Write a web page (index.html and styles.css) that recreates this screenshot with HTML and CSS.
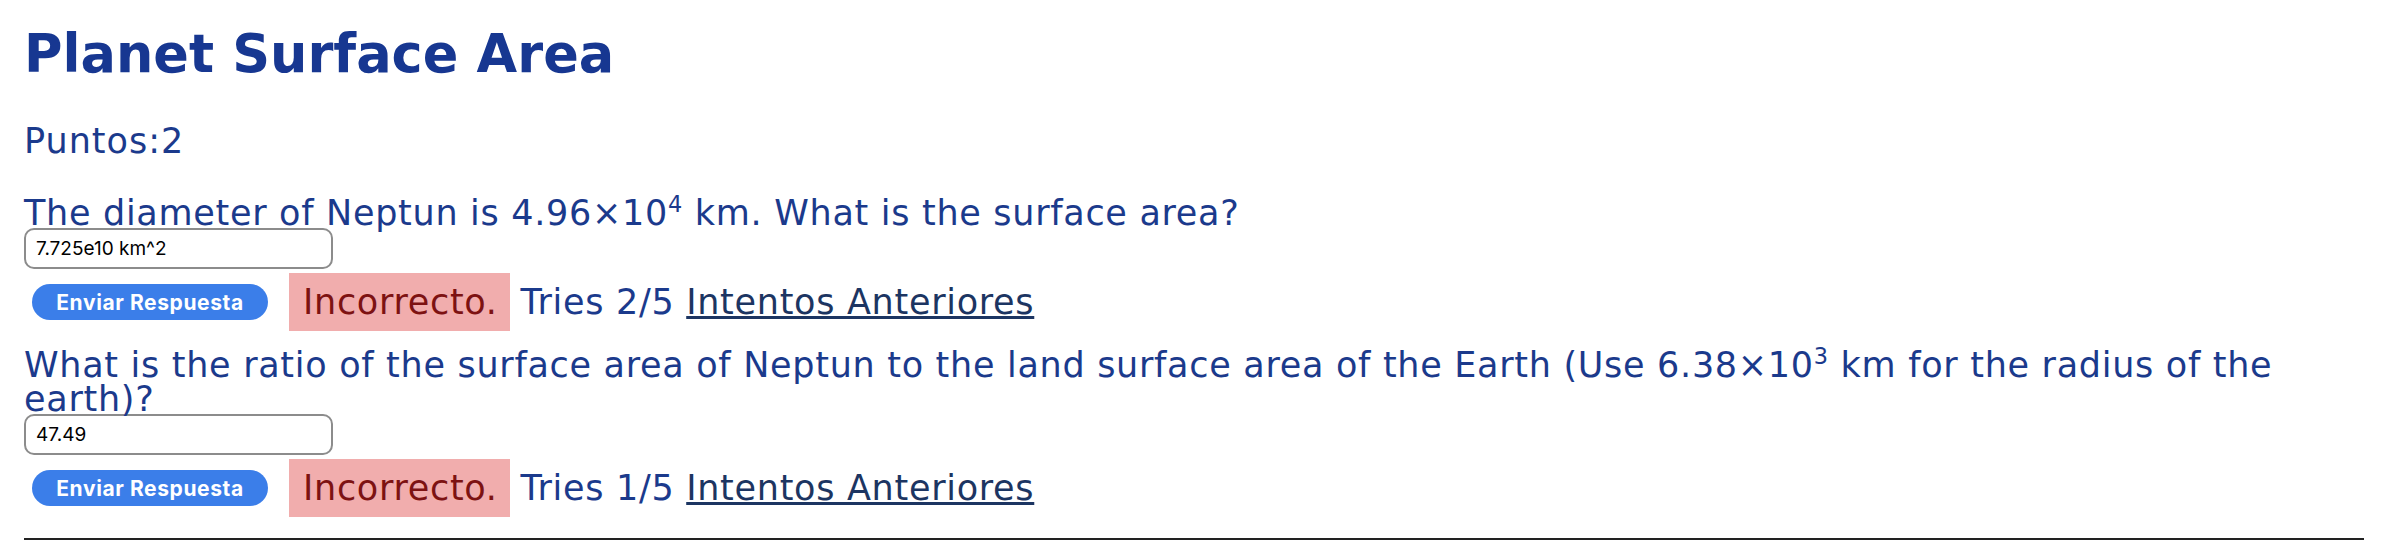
FILE: index.html
```html
<!DOCTYPE html>
<html lang="en">

<head>
    <meta charset="UTF-8">
    <title>Planet Surface Area</title>
    <link rel="stylesheet" href="styles.css">
</head>

<body>
    <div class="wrapper">
        <h1>Planet Surface Area</h1>
        <p class="puntos">Puntos:2</p>

        <section class="pregunta">
            <p class="texto">The diameter of Neptun is 4.96×10<sup>4</sup> km. What is the surface area?</p>
            <input class="svar" type="text" value="7.725e10 km^2">
            <div class="linje">
                <button class="send">Enviar Respuesta</button>
                <span class="forkert">Incorrecto. </span>
                <span class="forsog">Tries 2/5 <a href="#">Intentos Anteriores</a></span>
            </div>
        </section>

        <section class="pregunta">
            <p class="texto">What is the ratio of the surface area of Neptun to the land surface area of the Earth (Use 6.38×10<sup>3</sup> km for the radius of the earth)?</p>
            <input class="svar" type="text" value="47.49">
            <div class="linje">
                <button class="send">Enviar Respuesta</button>
                <span class="forkert">Incorrecto. </span>
                <span class="forsog">Tries 1/5 <a href="#">Intentos Anteriores</a></span>
            </div>
        </section>

        <hr>
    </div>
</body></html>
```

FILE: styles.css
```css
* {
    margin: 0;
    box-sizing: border-box;
}

body {
    background: #fff;
}

.wrapper {
    font-family: "DejaVu Sans", Verdana, sans-serif;
    color: #1b3a8c;
    padding: 0 24px;
}

h1 {
    font-size: 52.5px;
    line-height: 54px;
    margin-top: 27px;
    color: #173791;
}

.puntos {
    font-size: 35px;
    line-height: 34px;
    letter-spacing: 1px;
    margin-top: 43px;
}

.pregunta {
    margin-top: 17px;
}

.pregunta:first-of-type {
    margin-top: 38px;
}

.texto {
    font-size: 35px;
    line-height: 34px;
    letter-spacing: 0.7px;
}

sup {
    font-size: 0.64em;
    line-height: 0;
    vertical-align: 13px;
}

.svar {
    display: block;
    width: 309px;
    height: 41px;
    margin-top: -2px;
    border: 2px solid #8c8c8c;
    border-radius: 10px;
    padding: 0 10px;
    font-family: Inter, "Liberation Sans", sans-serif;
    font-size: 19px;
    color: #000;
}

.linje {
    display: flex;
    align-items: center;
    margin-top: 4px;
    font-size: 35px;
    line-height: 58px;
    letter-spacing: 0.7px;
}

.send {
    width: 236px;
    height: 36px;
    margin: 0 21px 0 8px;
    border: none;
    border-radius: 18px;
    background-color: #3b7ee9;
    color: #fff;
    font-family: Inter, "Liberation Sans", sans-serif;
    font-weight: bold;
    font-size: 21px;
    letter-spacing: 0.6px;
}

.forkert {
    background-color: #f1adad;
    color: #7d1212;
    padding-left: 14px;
    white-space: pre;
}

.forsog {
    margin-left: 11px;
    white-space: pre;
}

.forsog a {
    color: #1c3562;
}

hr {
    margin-top: 21px;
    border: none;
    border-top: 2px solid #222;
}
```
